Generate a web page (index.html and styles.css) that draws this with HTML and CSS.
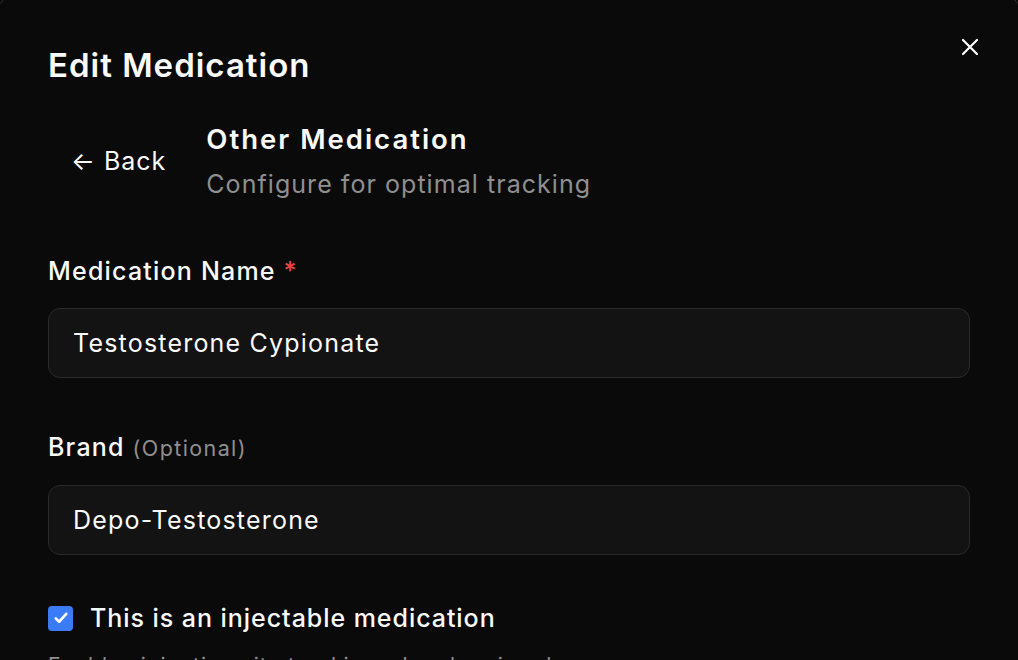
FILE: index.html
```html
<!DOCTYPE html>
<html>
<head>
    <title>Edit Medication</title>
    <link rel="stylesheet" href="styles.css">
</head>
<body>
    <div class="dialog">
        <button class="close-btn" aria-label="Close">
            <svg width="24" height="24" viewBox="0 0 24 24" fill="none" stroke="#fff" stroke-width="2.2" stroke-linecap="round">
                <path d="M5 5l14 14M19 5L5 19"/>
            </svg>
        </button>

        <h2 class="dialog-title">Edit Medication</h2>

        <div class="step-header">
            <button class="back-btn">&larr; Back</button>
            <div class="step-text">
                <h3>Other Medication</h3>
                <p>Configure for optimal tracking</p>
            </div>
        </div>

        <div class="field">
            <label>Medication Name <span class="req">*</span></label>
            <input type="text" class="text-input" value="Testosterone Cypionate">
        </div>

        <div class="field">
            <label>Brand <span class="optional">(Optional)</span></label>
            <input type="text" class="text-input" value="Depo-Testosterone">
        </div>

        <div class="check-row">
            <span class="checkbox">
                <svg width="18" height="18" viewBox="0 0 24 24" fill="none" stroke="#fff" stroke-width="3.6" stroke-linecap="round" stroke-linejoin="round">
                    <path d="M5 12.5l4.5 4.5L19 6.5"/>
                </svg>
            </span>
            <span class="check-label">This is an injectable medication</span>
        </div>
        <p class="hint">Enables injection site tracking when logging doses</p>
    </div>
</body>
</html>
```

FILE: styles.css
```css
body {
    margin: 0;
    padding: 0;
    background: #000;
    font-family: Inter, "Noto Sans", sans-serif;
    color: #fafafa;
    overflow: hidden;
}
.dialog {
    position: relative;
    box-sizing: border-box;
    width: 1024px;
    height: 664px;
    margin: -4px 0 0 -3px;
    background: #0a0a0a;
    border: 1px solid #2a2a2a;
    border-bottom: none;
    border-radius: 16px 16px 0 0;
    padding: 48px 50px 0 50px;
    overflow: hidden;
    letter-spacing: 1.1px;
}
.close-btn {
    position: absolute;
    top: 38px;
    right: 38px;
    background: none;
    border: none;
    padding: 0;
    cursor: pointer;
    display: flex;
}
.dialog-title {
    margin: 0;
    font-size: 33px;
    line-height: 40px;
    font-weight: 600;
    letter-spacing: 1px;
}
.step-header {
    display: flex;
    align-items: center;
    gap: 15px;
    margin-top: 37px;
}
.back-btn {
    background: none;
    border: none;
    color: #fafafa;
    font-family: inherit;
    font-size: 25px;
    letter-spacing: 1px;
    padding: 8px 25px 8px 23px;
    cursor: pointer;
}
.step-text h3 {
    margin: 0;
    font-size: 27.5px;
    line-height: 34px;
    font-weight: 600;
    letter-spacing: 2px;
}
.step-text p {
    margin: 12px 0 0 0;
    font-size: 25px;
    line-height: 32px;
    color: #8f8f8f;
    letter-spacing: 1.05px;
}
.field { margin-top: 55px; }
.field + .field { margin-top: 53px; }
.field label {
    display: block;
    font-size: 25px;
    line-height: 32px;
    font-weight: 500;
    letter-spacing: 1.2px;
}
.req { color: #ef4444; }
.optional {
    color: #8f8f8f;
    font-size: 21.5px;
    font-weight: 400;
    letter-spacing: 1.4px;
}
.text-input {
    display: block;
    box-sizing: border-box;
    width: 100%;
    height: 70px;
    margin-top: 21px;
    padding: 0 24px;
    background: #131313;
    border: 1.5px solid #2a2a2a;
    border-radius: 12px;
    color: #fafafa;
    font-family: inherit;
    font-size: 25px;
    letter-spacing: 1.2px;
    outline: none;
}
.check-row {
    display: flex;
    align-items: center;
    gap: 17px;
    margin-top: 47px;
}
.checkbox {
    width: 25px;
    height: 25px;
    border-radius: 4px;
    background: #3b7cf6;
    display: flex;
    align-items: center;
    justify-content: center;
}
.check-label {
    font-size: 25px;
    line-height: 32px;
    font-weight: 500;
    letter-spacing: 0.95px;
}
.hint {
    margin: 18px 0 0 0;
    font-size: 21px;
    line-height: 28px;
    color: #8f8f8f;
}
```
